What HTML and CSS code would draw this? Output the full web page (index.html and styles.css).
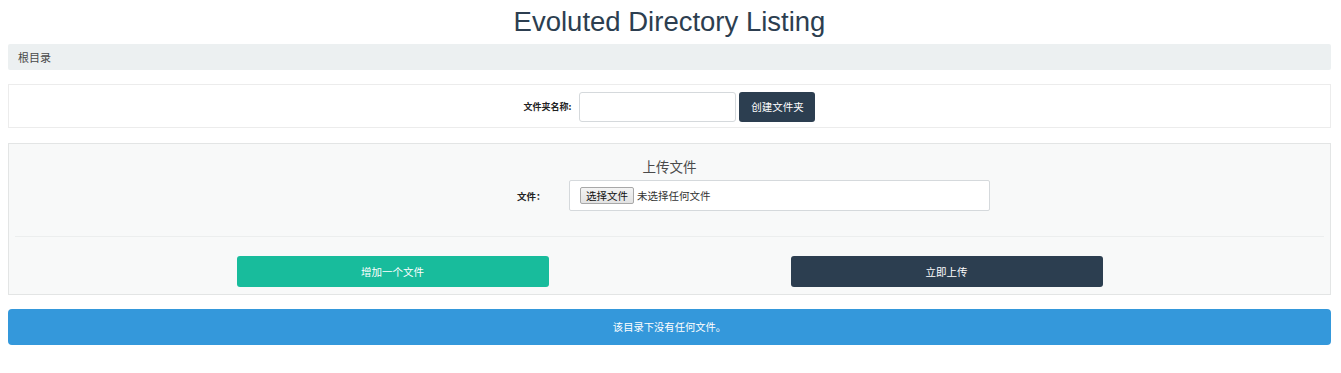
FILE: index.html
```html
<!DOCTYPE html>
<html lang="zh-CN">
<head>
<meta charset="utf-8">
<title>Evoluted Directory Listing</title>
<link rel="stylesheet" href="styles.css">
</head>
<body>
<div class="container">
  <h1 class="title">Evoluted Directory Listing</h1>
  <div class="breadcrumb">根目录</div>

  <div class="panel folder-panel">
    <label class="folder-label">文件夹名称:</label>
    <input class="folder-input" type="text">
    <button class="btn btn-dark btn-create">创建文件夹</button>
  </div>

  <div class="panel upload-panel">
    <div class="upload-title">上传文件</div>
    <div class="file-row">
      <label class="file-label">文件：</label>
      <div class="file-box">
        <span class="file-btn">选择文件</span>
        <span class="file-none">未选择任何文件</span>
      </div>
    </div>
    <div class="divider"></div>
    <div class="btn-row">
      <button class="btn btn-green btn-wide">增加一个文件</button>
      <button class="btn btn-dark btn-wide">立即上传</button>
    </div>
  </div>

  <div class="alert">该目录下没有任何文件。</div>
</div>
</body>
</html>
```

FILE: styles.css
```css
html, body {
  margin: 0;
  padding: 0;
  background: #ffffff;
}

body {
  font-family: "Liberation Sans", "Noto Sans CJK SC", sans-serif;
  color: #2c3e50;
}

.container {
  padding: 0 10px 0 8px;
}

.title {
  margin: 0;
  height: 44px;
  line-height: 44px;
  font-size: 27.5px;
  font-weight: normal;
  text-align: center;
  color: #2c3e50;
}

.breadcrumb {
  height: 26px;
  line-height: 26px;
  padding: 0 10px;
  background: #ecf0f1;
  border-radius: 2px;
  font-family: "Noto Sans CJK SC", sans-serif;
  font-size: 11px;
  color: #4a4a4a;
}

.panel {
  border: 1px solid #ececec;
  box-sizing: border-box;
}

.folder-panel {
  margin-top: 14px;
  height: 44px;
  display: flex;
  align-items: center;
  justify-content: center;
  background: #ffffff;
}

.folder-label {
  font-family: "Noto Sans CJK SC", sans-serif;
  font-size: 9px;
  font-weight: bold;
  color: #222;
  margin-right: 8px;
}

.folder-input {
  width: 157px;
  height: 30px;
  box-sizing: border-box;
  border: 1px solid #d5d9dc;
  border-radius: 3px;
  background: #fff;
  margin: 1px 3px 0 0;
  padding: 0 6px;
}

.btn {
  border: none;
  border-radius: 3px;
  color: #ffffff;
  font-family: "Noto Sans CJK SC", sans-serif;
  font-size: 10.5px;
  cursor: pointer;
  padding: 0;
}

.btn-dark {
  background: #2c3e50;
}

.btn-green {
  background: #18bc9c;
}

.btn-create {
  width: 76px;
  height: 30px;
  margin-top: 1px;
}

.upload-panel {
  margin-top: 15px;
  background: #f8f9f9;
  border-color: #e3e5e5;
  padding: 12px 6px 7px 6px;
}

.upload-title {
  text-align: center;
  font-family: "Noto Sans CJK SC", sans-serif;
  font-size: 13.5px;
  line-height: 20px;
  color: #4a4a4a;
}

.file-row {
  margin-top: 4px;
  display: flex;
  align-items: center;
  padding-left: 502px;
}

.file-label {
  font-family: "Noto Sans CJK SC", sans-serif;
  font-size: 9.5px;
  font-weight: bold;
  color: #222;
  width: 52px;
}

.file-box {
  width: 421px;
  height: 31px;
  box-sizing: border-box;
  border: 1px solid #d5d9dc;
  border-radius: 2px;
  background: #ffffff;
  display: flex;
  align-items: center;
  padding-left: 10px;
  font-family: "Noto Sans CJK SC", sans-serif;
  font-size: 10.5px;
  color: #222;
}

.file-btn {
  height: 17px;
  line-height: 15px;
  box-sizing: border-box;
  padding: 0 5px;
  border: 1px solid #a8a8a8;
  border-radius: 2px;
  background: linear-gradient(#f4f4f4, #e2e2e2);
  margin-right: 3px;
  color: #111;
}

.file-none {
  color: #333;
}

.divider {
  margin-top: 25px;
  border-top: 1px solid #eceeee;
}

.btn-row {
  margin-top: 19px;
  display: flex;
  justify-content: center;
  gap: 242px;
}

.btn-wide {
  width: 312px;
  height: 31px;
}

.alert {
  margin-top: 14px;
  height: 36px;
  line-height: 36px;
  background: #3498db;
  border-radius: 4px;
  text-align: center;
  color: #ffffff;
  font-family: "Noto Sans CJK SC", sans-serif;
  font-size: 10.3px;
}
```
